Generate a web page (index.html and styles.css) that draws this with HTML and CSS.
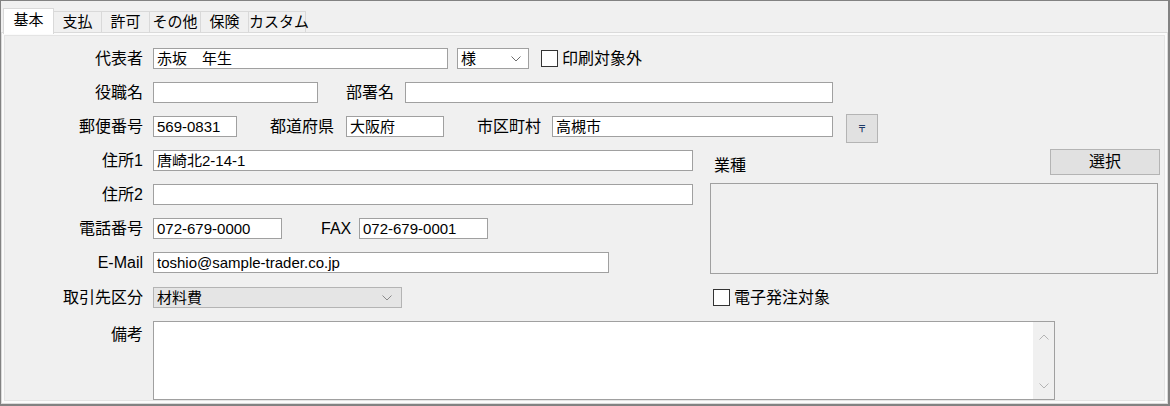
FILE: index.html
```html
<!DOCTYPE html>
<html>
<head>
    <meta charset="UTF-8" />
    <title>取引先</title>
    <link rel="stylesheet" href="styles.css">
</head>

<body>
    <div class="window">
        <div class="tabs">
            <div class="tab on t1">基本</div>
            <div class="tab t2">支払</div>
            <div class="tab t3">許可</div>
            <div class="tab t4">その他</div>
            <div class="tab t5">保険</div>
            <div class="tab t6">カスタム</div>
        </div>
        <div class="page">
            <div class="panel">
                <div class="row">
                    <div class="lbl">代表者</div>
                    <div class="field w-name">赤坂　年生</div>
                    <div class="combo w-title">様
                        <svg width="10" height="6" viewBox="0 0 10 6"><polyline points="0.5,0.5 5,5 9.5,0.5" fill="none" stroke="#6d6d6d" stroke-width="1"/></svg>
                    </div>
                    <span class="check"></span><span class="ctext">印刷対象外</span>
                </div>
                <div class="row">
                    <div class="lbl">役職名</div>
                    <div class="field w-post"></div>
                    <div class="lbl2 l-dept">部署名</div>
                    <div class="field w-dept"></div>
                </div>
                <div class="row">
                    <div class="lbl">郵便番号</div>
                    <div class="field w-zip">569-0831</div>
                    <div class="lbl2 l-pref">都道府県</div>
                    <div class="field w-pref">大阪府</div>
                    <div class="lbl2 l-city">市区町村</div>
                    <div class="field w-city">高槻市</div>
                    <div class="btn-post">〒</div>
                </div>

                <div class="middle">
                    <div class="left">
                        <div class="row">
                            <div class="lbl">住所1</div>
                            <div class="field w-addr">唐崎北2-14-1</div>
                        </div>
                        <div class="row">
                            <div class="lbl">住所2</div>
                            <div class="field w-addr"></div>
                        </div>
                        <div class="row">
                            <div class="lbl">電話番号</div>
                            <div class="field w-tel">072-679-0000</div>
                            <div class="lbl2 l-fax">FAX</div>
                            <div class="field w-tel">072-679-0001</div>
                        </div>
                        <div class="row wide">
                            <div class="lbl">E-Mail</div>
                            <div class="field w-mail">toshio@sample-trader.co.jp</div>
                        </div>
                        <div class="row">
                            <div class="lbl">取引先区分</div>
                            <div class="combo gray w-kind">材料費
                                <svg width="10" height="6" viewBox="0 0 10 6"><polyline points="0.5,0.5 5,5 9.5,0.5" fill="none" stroke="#8a8a8a" stroke-width="1"/></svg>
                            </div>
                        </div>
                    </div>
                    <div class="right">
                        <div class="head">
                            <span class="head-lbl">業種</span>
                            <div class="btn">選択</div>
                        </div>
                        <div class="listbox"></div>
                        <div class="check-row">
                            <span class="check"></span><span class="ctext">電子発注対象</span>
                        </div>
                    </div>
                </div>

                <div class="row memo-row">
                    <div class="lbl memo-lbl">備考</div>
                    <div class="memo">
                        <div class="scroll">
                            <svg width="10" height="6" viewBox="0 0 10 6"><polyline points="0.5,5.5 5,1 9.5,5.5" fill="none" stroke="#b4b4b4" stroke-width="1"/></svg>
                            <svg width="10" height="6" viewBox="0 0 10 6"><polyline points="0.5,0.5 5,5 9.5,0.5" fill="none" stroke="#b4b4b4" stroke-width="1"/></svg>
                        </div>
                    </div>
                </div>
            </div>
        </div>
    </div>
</body>

</html>
```

FILE: styles.css
```css
*{
    margin: 0;
    padding: 0;
    box-sizing: border-box;
}
body{
    width: 1170px;
    height: 406px;
    overflow: hidden;
    background-color: #f0f0f0;
    font-family: "Liberation Sans", "Noto Sans CJK JP", sans-serif;
    font-size: 16px;
    color: #000;
}
.window{
    width: 1170px;
    height: 406px;
    border: 1px solid #828282;
    border-right-width: 2px;
    border-bottom-width: 2px;
    display: flex;
    flex-direction: column;
}

/* tabs */
.tabs{
    height: 31px;
    display: flex;
    align-items: flex-end;
    padding-left: 2px;
}
.tab{
    height: 21px;
    margin-left: -1px;
    border: 1px solid #d9d9d9;
    border-bottom: 0;
    background-color: #f0f0f0;
    font-size: 15px;
    line-height: 20px;
    text-align: center;
    white-space: nowrap;
}
.tab.on{
    position: relative;
    z-index: 1;
    height: 26px;
    margin-left: 0;
    margin-bottom: -2px;
    background-color: #fff;
    line-height: 22px;
}
.t1{width: 51px;}
.t2{width: 49px;}
.t3{width: 49px;}
.t4{width: 52px;}
.t5{width: 49px;}
.t6{width: 58px;}

.page{
    flex: 1;
    border: 1px solid #dadada;
    background-color: #fbfbfb;
    padding: 2px;
}
.panel{
    height: 100%;
    border: 1px solid #e4e4e4;
    background-color: #f0f0f0;
    padding-top: 12px;
}

/* rows */
.row{
    display: flex;
    align-items: center;
    height: 21px;
    margin-bottom: 13px;
}
.row.wide{
    margin-bottom: 14px;
}
.lbl{
    width: 138px;
    margin-right: 10px;
    text-align: right;
    line-height: 21px;
    white-space: nowrap;
}
.lbl2{
    line-height: 21px;
    white-space: nowrap;
}
.l-dept{margin-left: 28px; width: 48px; margin-right: 11px;}
.l-pref{margin-left: 33px; width: 64px; margin-right: 12px;}
.l-city{margin-left: 33px; width: 64px; margin-right: 11px;}
.l-fax{margin-left: 39px; width: 29px; margin-right: 9px;}

.field{
    height: 21px;
    border: 1px solid #a0a0a0;
    background-color: #fff;
    padding-left: 3px;
    font-size: 15px;
    line-height: 19px;
    white-space: nowrap;
    overflow: hidden;
}
.w-name{width: 295px;}
.w-post{width: 165px;}
.w-dept{width: 428px;}
.w-zip{width: 84px;}
.w-pref{width: 98px;}
.w-city{width: 281px;}
.w-addr{width: 540px;}
.w-tel{width: 129px;}
.w-mail{width: 456px;}

.combo{
    height: 21px;
    display: flex;
    align-items: center;
    justify-content: space-between;
    border: 1px solid #a0a0a0;
    background-color: #fff;
    padding: 0 7px 0 3px;
    font-size: 15px;
    line-height: 19px;
}
.combo.gray{
    background-color: #e5e5e5;
    border-color: #b4b4b4;
}
.w-title{width: 72px; margin-left: 9px;}
.w-kind{width: 249px; padding-right: 9px;}

.check{
    width: 17px;
    height: 17px;
    border: 1px solid #333;
    background-color: #fff;
    margin-left: 12px;
}
.ctext{
    margin-left: 4px;
    line-height: 21px;
    white-space: nowrap;
}

.btn-post{
    width: 32px;
    height: 29px;
    margin-left: 13px;
    margin-top: 4px;
    border: 1px solid #b4b4b4;
    background-color: #e1e1e1;
    color: #1d3a66;
    font-size: 9px;
    font-weight: bold;
    display: flex;
    align-items: center;
    justify-content: center;
}

/* middle block */
.middle{
    display: flex;
}
.left{
    width: 688px;
}
.right{
    width: 450px;
    margin-left: 17px;
}
.head{
    height: 26px;
    margin-top: -1px;
    display: flex;
    justify-content: space-between;
}
.head-lbl{
    padding: 6px 0 0 4px;
    line-height: 21px;
}
.btn{
    width: 110px;
    height: 26px;
    border: 1px solid #b4b4b4;
    background-color: #e1e1e1;
    text-align: center;
    line-height: 23px;
}
.listbox{
    width: 448px;
    height: 91px;
    margin-top: 8px;
    border: 1px solid #a0a0a0;
    background-color: #f0f0f0;
}
.check-row{
    display: flex;
    align-items: center;
    height: 21px;
    margin-top: 13px;
    padding-left: 3px;
}
.check-row .check{
    margin-left: 0;
}

/* memo */
.memo-row{
    align-items: flex-start;
    height: 79px;
    margin-bottom: 0;
}
.memo-lbl{
    padding-top: 3px;
}
.memo{
    width: 902px;
    height: 79px;
    border: 1px solid #a0a0a0;
    background-color: #fff;
    display: flex;
    justify-content: flex-end;
}
.scroll{
    width: 21px;
    height: 100%;
    background-color: #f0f0f0;
    display: flex;
    flex-direction: column;
    align-items: center;
    justify-content: space-between;
    padding: 12px 0 10px;
}
```
